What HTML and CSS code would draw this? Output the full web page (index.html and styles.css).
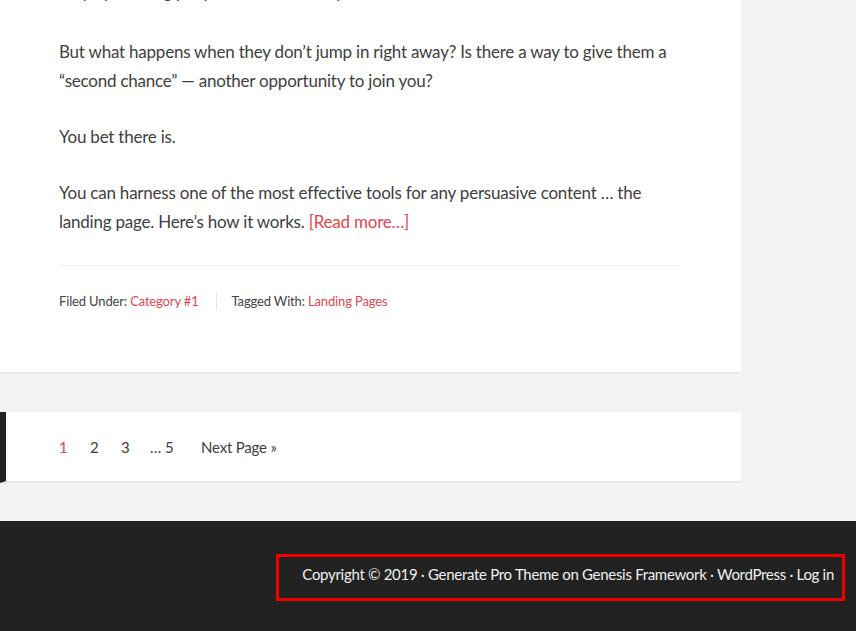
FILE: index.html
```html
<!DOCTYPE html>
<html>
<head>
<meta charset="utf-8">
<link rel="stylesheet" href="styles.css">
</head>
<body>
<div class="site">
  <main class="content">
    <article class="entry">
      <div class="entry-content">
        <p class="cut">only by offering people a reason to stay.</p>
        <p>But what happens when they don’t jump in right away? Is there a way to give them a “second chance” — another opportunity to join you?</p>
        <p>You bet there is.</p>
        <p>You can harness one of the most effective tools for any persuasive content … the landing page. Here’s how it works. <a href="#">[Read more…]</a></p>
      </div>
      <footer class="entry-footer">
        <p class="entry-meta">
          <span class="cats">Filed Under: <a href="#">Category #1</a></span>
          <span class="tags">Tagged With: <a href="#">Landing Pages</a></span>
        </p>
      </footer>
    </article>
    <nav class="pagination">
      <ul>
        <li class="pg active"><a href="#">1</a></li>
        <li class="pg"><a href="#">2</a></li>
        <li class="pg pg-narrow"><a href="#">3</a></li>
        <li class="pg-gap"><span>…</span><a href="#">5</a></li>
        <li><a href="#">Next Page »</a></li>
      </ul>
    </nav>
  </main>
  <footer class="site-footer">
    <p class="creds">Copyright © 2019 · <a href="#">Generate Pro Theme</a> on <a href="#">Genesis Framework</a> · <a href="#">WordPress</a> · <a href="#">Log in</a></p>
  </footer>
</div>
</body>
</html>
```
FILE: styles.css
```css
* { box-sizing: border-box; }
html, body { margin: 0; padding: 0; }
body {
  background: #f3f3f3;
  font-family: "Lato", "Liberation Sans", sans-serif;
  color: #404040;
  font-weight: 400;
  overflow: hidden;
  height: 631px;
}
a { text-decoration: none; color: #df4650; }
.content { width: 741px; }
.entry {
  background: #fff;
  border-bottom: 2px solid #e8e8e8;
  padding: 0 60px 0 59px;
}
.entry-content p {
  margin: 0 0 27px;
  font-size: 17px;
  letter-spacing: -0.22px;
  line-height: 29px;
}
.entry-content p.cut { margin-top: -23px; margin-bottom: 31px; }
.entry-content { padding-bottom: 2px; border-bottom: 1px solid #ececec; }
.entry-footer { padding: 26px 0 62px; }
.entry-meta { margin: 0; font-size: 13px; letter-spacing: -0.15px; line-height: 18px; display: flex; color: #444; }
.entry-meta .cats { padding-right: 17px; border-right: 1px solid #e6e6e6; }
.entry-meta .tags { padding-left: 15px; }
.pagination {
  margin-top: 38px;
  background: #fff;
  border-left: 6px solid #222;
  border-bottom: 2px solid #e8e8e8;
  height: 71px;
  display: flex;
  align-items: center;
  padding-left: 53px;
}
.pagination ul { list-style: none; margin: 0; padding: 0; display: flex; font-size: 15px; letter-spacing: -0.2px; }
.pagination li { flex: none; }
.pagination li.pg { width: 31px; }
.pagination li.pg-narrow { width: 29px; }
.pagination li.pg-gap { width: 51px; }
.pagination li a { color: #404040; }
.pagination li.active a { color: #df4650; }
.pagination li span { margin-right: 4px; }
.site-footer {
  margin-top: 38px;
  background: #222;
  height: 110px;
  padding: 33px 11px 0 0;
  display: flex;
  justify-content: flex-end;
}
.creds {
  margin: 0;
  border: 3px solid #e00;
  padding: 7px 8px 13px 20px;
  font-size: 15px;
  letter-spacing: -0.3px;
  line-height: 21px;
  color: #f0f0f0;
  width: 569px;
  height: 47px;
  text-align: right;
  white-space: nowrap;
}
.creds a { color: #f0f0f0; }
```
